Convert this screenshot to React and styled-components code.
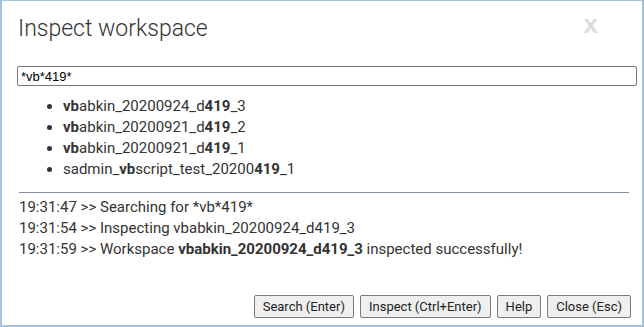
import React from 'react'
import styled, { createGlobalStyle } from 'styled-components'

const GlobalStyle = createGlobalStyle`
  html, body {
    margin: 0;
    padding: 0;
    background: #fff;
  }
  * {
    box-sizing: border-box;
  }
`

const results = [
  ['vb', 'abkin_20200924_d', '419', '_3'],
  ['vb', 'abkin_20200921_d', '419', '_2'],
  ['vb', 'abkin_20200921_d', '419', '_1'],
]

const logLines = [
  { time: '19:31:47', text: 'Searching for *vb*419*' },
  { time: '19:31:54', text: 'Inspecting vbabkin_20200924_d419_3' },
]

const Dialog = () => {
  return (
    <Wrapper>
      <Header>
        <Title>Inspect workspace</Title>
        <CloseX>x</CloseX>
      </Header>
      <Body>
        <SearchInput type='text' defaultValue='*vb*419*' />
        <ResultList>
          {results.map(([a, b, c, d], i) => (
            <li key={i}>
              <b>{a}</b>
              {b}
              <b>{c}</b>
              {d}
            </li>
          ))}
          <li>
            sadmin_<b>vb</b>script_test_20200<b>419</b>_1
          </li>
        </ResultList>
        <Divider />
        <Log>
          {logLines.map((l) => (
            <p key={l.time}>
              {l.time} &gt;&gt; {l.text}
            </p>
          ))}
          <p>
            19:31:59 &gt;&gt; Workspace <b>vbabkin_20200924_d419_3</b> inspected
            successfully!
          </p>
        </Log>
      </Body>
      <Footer>
        <Button>Search (Enter)</Button>
        <Button>Inspect (Ctrl+Enter)</Button>
        <Button>Help</Button>
        <Button>Close (Esc)</Button>
      </Footer>
    </Wrapper>
  )
}

const Wrapper = styled.div`
  width: 644px;
  height: 327px;
  border: 2px solid #a6c1dc;
  border-top-width: 1px;
  background: #fff;
  display: flex;
  flex-direction: column;
  font-family: Roboto, 'Liberation Sans', sans-serif;
  color: #333;
`

const Header = styled.div`
  display: flex;
  justify-content: space-between;
  align-items: flex-start;
  padding: 11px 44px 0 16px;
  height: 65px;
`

const Title = styled.h1`
  margin: 0;
  font-weight: 300;
  font-size: 23px;
  line-height: 34px;
  color: #333;
`

const CloseX = styled.span`
  font-family: 'Liberation Sans', Arial, sans-serif;
  font-weight: 700;
  font-size: 26px;
  line-height: 26px;
  margin-top: -1px;
  color: #dcdcdc;
`

const Body = styled.div`
  flex: 1;
  padding: 0 6px 0 15px;
`

const SearchInput = styled.input`
  display: block;
  width: 620px;
  height: 20px;
  padding: 0 3px;
  border: 1px solid #767676;
  border-radius: 2px;
  font-family: 'Liberation Sans', Arial, sans-serif;
  font-size: 13px;
  color: #000;
  outline: none;
`

const ResultList = styled.ul`
  margin: 10px 0 0;
  padding: 0 0 0 46px;
  font-size: 15px;
  line-height: 21px;
  li {
    padding: 0;
  }
  b {
    font-weight: 700;
  }
`

const Divider = styled.hr`
  margin: 12px 0 4px 2px;
  width: 610px;
  border: 0;
  border-top: 1px solid #7f8f9f;
  height: 0;
`

const Log = styled.div`
  padding-left: 2px;
  font-size: 15px;
  line-height: 21px;
  p {
    margin: 0;
  }
`

const Footer = styled.div`
  display: flex;
  justify-content: flex-end;
  gap: 6px;
  padding: 0 11px 7px 0;
`

const Button = styled.button`
  height: 23px;
  padding: 0 8px;
  background: #efefef;
  border: 1px solid #7a7a7a;
  border-radius: 2px;
  font-family: Roboto, 'Liberation Sans', sans-serif;
  font-size: 13px;
  color: #222;
`

const App = () => (
  <>
    <GlobalStyle />
    <Dialog />
  </>
)

export default App
